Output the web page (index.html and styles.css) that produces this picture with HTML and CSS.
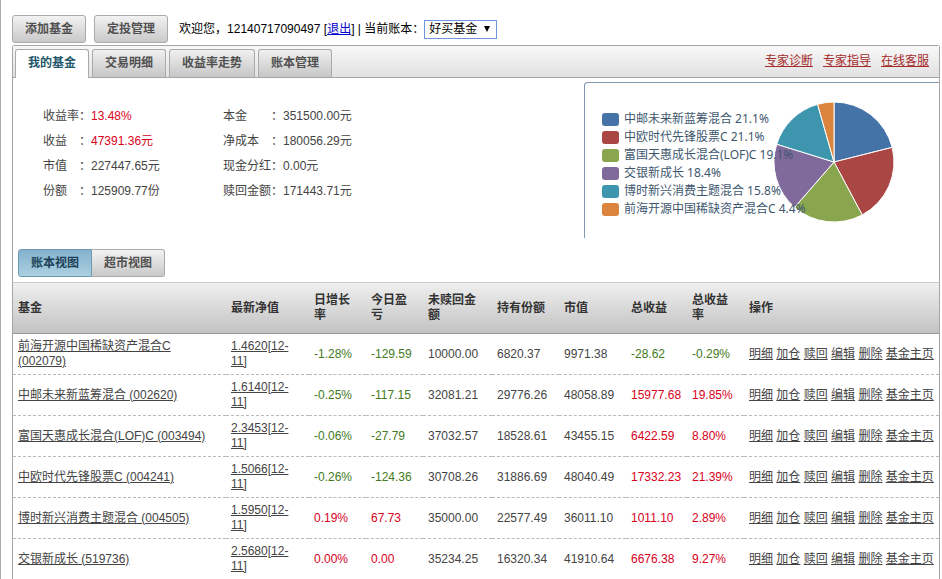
FILE: index.html
```html
<!DOCTYPE html>
<html lang="zh-CN">
<head>
<meta charset="utf-8">
<title>我的基金</title>
<link rel="stylesheet" href="styles.css">
</head>
<body>
<div class="page">
  <header class="toolbar">
    <button type="button" class="btn">添加基金</button>
    <button type="button" class="btn">定投管理</button>
    <div class="welcome">
      <span>欢迎您，12140717090497 [<a href="#">退出</a>] | <label for="book">当前账本：</label></span>
      <span class="picker"><select id="book"><option>好买基金</option></select></span>
    </div>
  </header>
  <main class="panel">
    <div class="tabbar">
      <nav class="tabs">
        <a class="tab active" href="#">我的基金</a>
        <a class="tab" href="#">交易明细</a>
        <a class="tab" href="#">收益率走势</a>
        <a class="tab" href="#">账本管理</a>
      </nav>
      <nav class="help">
        <a href="#">专家诊断</a>
        <a href="#">专家指导</a>
        <a href="#">在线客服</a>
      </nav>
    </div>
    <section class="summary">
      <dl class="facts">
        <div><dt>收益率</dt><dd class="up">13.48%</dd></div>
        <div><dt>收益</dt><dd class="up">47391.36元</dd></div>
        <div><dt>市值</dt><dd>227447.65元</dd></div>
        <div><dt>份额</dt><dd>125909.77份</dd></div>
      </dl>
      <dl class="facts wide">
        <div><dt>本金</dt><dd>351500.00元</dd></div>
        <div><dt>净成本</dt><dd>180056.29元</dd></div>
        <div><dt>现金分红</dt><dd>0.00元</dd></div>
        <div><dt>赎回金额</dt><dd>171443.71元</dd></div>
      </dl>
      <div class="chart">
        <svg class="pie" viewBox="-61 -61 122 122" aria-hidden="true">
          <path class="c1" d="M0 0L0 -60A60 60 0 0 1 58.2 -14.6Z"/>
          <path class="c2" d="M0 0L58.2 -14.6A60 60 0 0 1 28.2 52.9Z"/>
          <path class="c3" d="M0 0L28.2 52.9A60 60 0 0 1 -39.4 45.3Z"/>
          <path class="c4" d="M0 0L-39.4 45.3A60 60 0 0 1 -57.3 -17.8Z"/>
          <path class="c5" d="M0 0L-57.3 -17.8A60 60 0 0 1 -16.4 -57.7Z"/>
          <path class="c6" d="M0 0L-16.4 -57.7A60 60 0 0 1 0 -60Z"/>
        </svg>
        <ul class="legend">
          <li><i class="c1"></i>中邮未来新蓝筹混合 21.1%</li>
          <li><i class="c2"></i>中欧时代先锋股票C 21.1%</li>
          <li><i class="c3"></i>富国天惠成长混合(LOF)C 19.1%</li>
          <li><i class="c4"></i>交银新成长 18.4%</li>
          <li><i class="c5"></i>博时新兴消费主题混合 15.8%</li>
          <li><i class="c6"></i>前海开源中国稀缺资产混合C 4.4%</li>
        </ul>
      </div>
    </section>
    <div class="views">
      <button type="button" class="btn on">账本视图</button>
      <button type="button" class="btn">超市视图</button>
    </div>
    <table class="funds">
      <colgroup>
        <col><col class="w-nav"><col class="w-s"><col class="w-s"><col class="w-l"><col class="w-m"><col class="w-m"><col class="w-p"><col class="w-s"><col class="w-ops">
      </colgroup>
      <thead>
        <tr><th>基金</th><th>最新净值</th><th>日增长率</th><th>今日盈亏</th><th>未赎回金额</th><th>持有份额</th><th>市值</th><th>总收益</th><th>总收益率</th><th>操作</th></tr>
      </thead>
      <tbody>
        <tr><td><a href="#">前海开源中国稀缺资产混合C (002079)</a></td><td><a href="#">1.4620[12-11]</a></td><td class="down">-1.28%</td><td class="down">-129.59</td><td>10000.00</td><td>6820.37</td><td>9971.38</td><td class="down">-28.62</td><td class="down">-0.29%</td><td class="ops"><a href="#">明细</a> <a href="#">加仓</a> <a href="#">赎回</a> <a href="#">编辑</a> <a href="#">删除</a> <a href="#">基金主页</a></td></tr>
        <tr><td><a href="#">中邮未来新蓝筹混合 (002620)</a></td><td><a href="#">1.6140[12-11]</a></td><td class="down">-0.25%</td><td class="down">-117.15</td><td>32081.21</td><td>29776.26</td><td>48058.89</td><td class="up">15977.68</td><td class="up">19.85%</td><td class="ops"><a href="#">明细</a> <a href="#">加仓</a> <a href="#">赎回</a> <a href="#">编辑</a> <a href="#">删除</a> <a href="#">基金主页</a></td></tr>
        <tr><td><a href="#">富国天惠成长混合(LOF)C (003494)</a></td><td><a href="#">2.3453[12-11]</a></td><td class="down">-0.06%</td><td class="down">-27.79</td><td>37032.57</td><td>18528.61</td><td>43455.15</td><td class="up">6422.59</td><td class="up">8.80%</td><td class="ops"><a href="#">明细</a> <a href="#">加仓</a> <a href="#">赎回</a> <a href="#">编辑</a> <a href="#">删除</a> <a href="#">基金主页</a></td></tr>
        <tr><td><a href="#">中欧时代先锋股票C (004241)</a></td><td><a href="#">1.5066[12-11]</a></td><td class="down">-0.26%</td><td class="down">-124.36</td><td>30708.26</td><td>31886.69</td><td>48040.49</td><td class="up">17332.23</td><td class="up">21.39%</td><td class="ops"><a href="#">明细</a> <a href="#">加仓</a> <a href="#">赎回</a> <a href="#">编辑</a> <a href="#">删除</a> <a href="#">基金主页</a></td></tr>
        <tr><td><a href="#">博时新兴消费主题混合 (004505)</a></td><td><a href="#">1.5950[12-11]</a></td><td class="up">0.19%</td><td class="up">67.73</td><td>35000.00</td><td>22577.49</td><td>36011.10</td><td class="up">1011.10</td><td class="up">2.89%</td><td class="ops"><a href="#">明细</a> <a href="#">加仓</a> <a href="#">赎回</a> <a href="#">编辑</a> <a href="#">删除</a> <a href="#">基金主页</a></td></tr>
        <tr><td><a href="#">交银新成长 (519736)</a></td><td><a href="#">2.5680[12-11]</a></td><td class="up">0.00%</td><td class="up">0.00</td><td>35234.25</td><td>16320.34</td><td>41910.64</td><td class="up">6676.38</td><td class="up">9.27%</td><td class="ops"><a href="#">明细</a> <a href="#">加仓</a> <a href="#">赎回</a> <a href="#">编辑</a> <a href="#">删除</a> <a href="#">基金主页</a></td></tr>
      </tbody>
    </table>
  </main>
</div>
</body>
</html>
```
FILE: styles.css
```css
* { box-sizing: border-box; }
body {
  margin: 0;
  background: #fff;
  color: #444;
  font: 12px/15px "Liberation Sans", "Noto Sans CJK SC", sans-serif;
}
.page {
  min-height: 100vh;
  padding: 15px 2px 0 11px;
  border-left: 1px solid #aaa;
}

/* top bar */
.toolbar { display: flex; align-items: center; gap: 8px; }
.btn {
  height: 28px;
  padding: 0 12px;
  border: 1px solid #aaa;
  border-radius: 3px;
  background: linear-gradient(#f2f2f2, #c9c9c9);
  color: #505050;
  font: bold 12px/15px "Liberation Sans", "Noto Sans CJK SC", sans-serif;
}
.welcome { display: flex; align-items: center; padding-left: 3px; color: #000; }
.welcome a { color: #00c; }
.picker { position: relative; display: flex; }
.picker select {
  appearance: none;
  width: 73px;
  height: 19px;
  padding: 0 4px;
  border: 1px solid #7195dc;
  border-radius: 0;
  background: #fff;
  color: #000;
  font: inherit;
}
.picker::after {
  content: "";
  position: absolute;
  top: 6px;
  right: 7px;
  border: solid transparent;
  border-width: 6px 3px 0;
  border-top-color: #000;
  pointer-events: none;
}

/* panel and tabs */
.panel {
  margin-top: 2px;
  border: 1px solid #a6a6a6;
  border-bottom: 0;
  border-radius: 3px 3px 0 0;
}
.tabbar {
  display: flex;
  justify-content: space-between;
  height: 32px;
  padding: 0 10px 0 2px;
  border-bottom: 1px solid #a6a6a6;
  background: linear-gradient(#f8f8f8, #e1e1e1);
}
.tabs { display: flex; gap: 3px; padding-top: 3px; }
.tab {
  height: 28px;
  padding: 6px 12px;
  border: 1px solid #aaa;
  border-bottom: 0;
  border-radius: 3px 3px 0 0;
  background: linear-gradient(#f0f0f0, #c6c6c6);
  color: #505050;
  font-weight: bold;
  text-decoration: none;
}
.tab.active { height: 29px; background: #fff; color: #24566b; }
.help { display: flex; align-items: center; gap: 10px; }
.help a { color: #a52a2a; }

/* summary */
.summary { display: flex; align-items: flex-start; padding: 4px 0 0 30px; }
.facts { width: 180px; margin: 22px 0 0; line-height: 25px; white-space: nowrap; }
.facts div { display: flex; }
.facts dt { display: flex; justify-content: space-between; width: 48px; }
.facts dt::after { content: "："; }
.facts.wide dt { width: 60px; }
.facts dd { margin: 0; }
.up, .facts .up { color: #d9001b; }
.down { color: #437a1c; }
.chart {
  position: relative;
  width: 355px;
  height: 156px;
  margin-left: auto;
  border: solid #8298b0;
  border-width: 1px 0 0 1px;
  border-radius: 4px 0 0 0;
}
.pie { position: absolute; top: 18px; right: 44px; width: 122px; height: 122px; }
.pie path { stroke: #fff; stroke-width: 1; }
.legend {
  position: relative;
  margin: 0;
  padding: 27px 0 0 17px;
  list-style: none;
  color: #3e576f;
  font-family: "Noto Sans", "Noto Sans CJK SC", sans-serif;
  line-height: 18px;
}
.legend li { display: flex; align-items: center; gap: 5px; height: 18px; }
.legend i { width: 17px; height: 13px; border-radius: 3px; }
.c1 { fill: #4572a7; background: #4572a7; }
.c2 { fill: #aa4643; background: #aa4643; }
.c3 { fill: #89a54e; background: #89a54e; }
.c4 { fill: #80699b; background: #80699b; }
.c5 { fill: #3d96ae; background: #3d96ae; }
.c6 { fill: #db843d; background: #db843d; }

/* view switch */
.views { display: flex; padding: 11px 5px 5px; }
.views .btn:first-child { border-radius: 3px 0 0 3px; }
.views .btn:last-child { border-left: 0; border-radius: 0 3px 3px 0; }
.views .on {
  border-color: #6f9ab0;
  background: linear-gradient(#83b1cc, #acd0e2);
  color: #1c4257;
}

/* fund table */
.funds { width: 100%; table-layout: fixed; border-collapse: separate; border-spacing: 0; }
.w-nav { width: 83px; }
.w-s { width: 57px; }
.w-p { width: 61px; }
.w-m { width: 67px; }
.w-l { width: 69px; }
.w-ops { width: 195px; }
.funds thead tr { background: linear-gradient(#f0f0f0, #c2c2c2); }
.funds th {
  height: 52px;
  padding: 0 10px 0 5px;
  border-top: 1px solid #ccc;
  border-bottom: 1px solid #999;
  color: #333;
  text-align: left;
}
.funds td {
  height: 41px;
  padding: 5px 10px 5px 5px;
  border-bottom: 1px dashed #bbb;
}
.funds tbody tr:last-child td { height: 40px; border-bottom: 0; }
.funds thead th { height: 52px; }
.funds a { color: #444; }
.funds .ops { padding-right: 0; white-space: nowrap; }
```
